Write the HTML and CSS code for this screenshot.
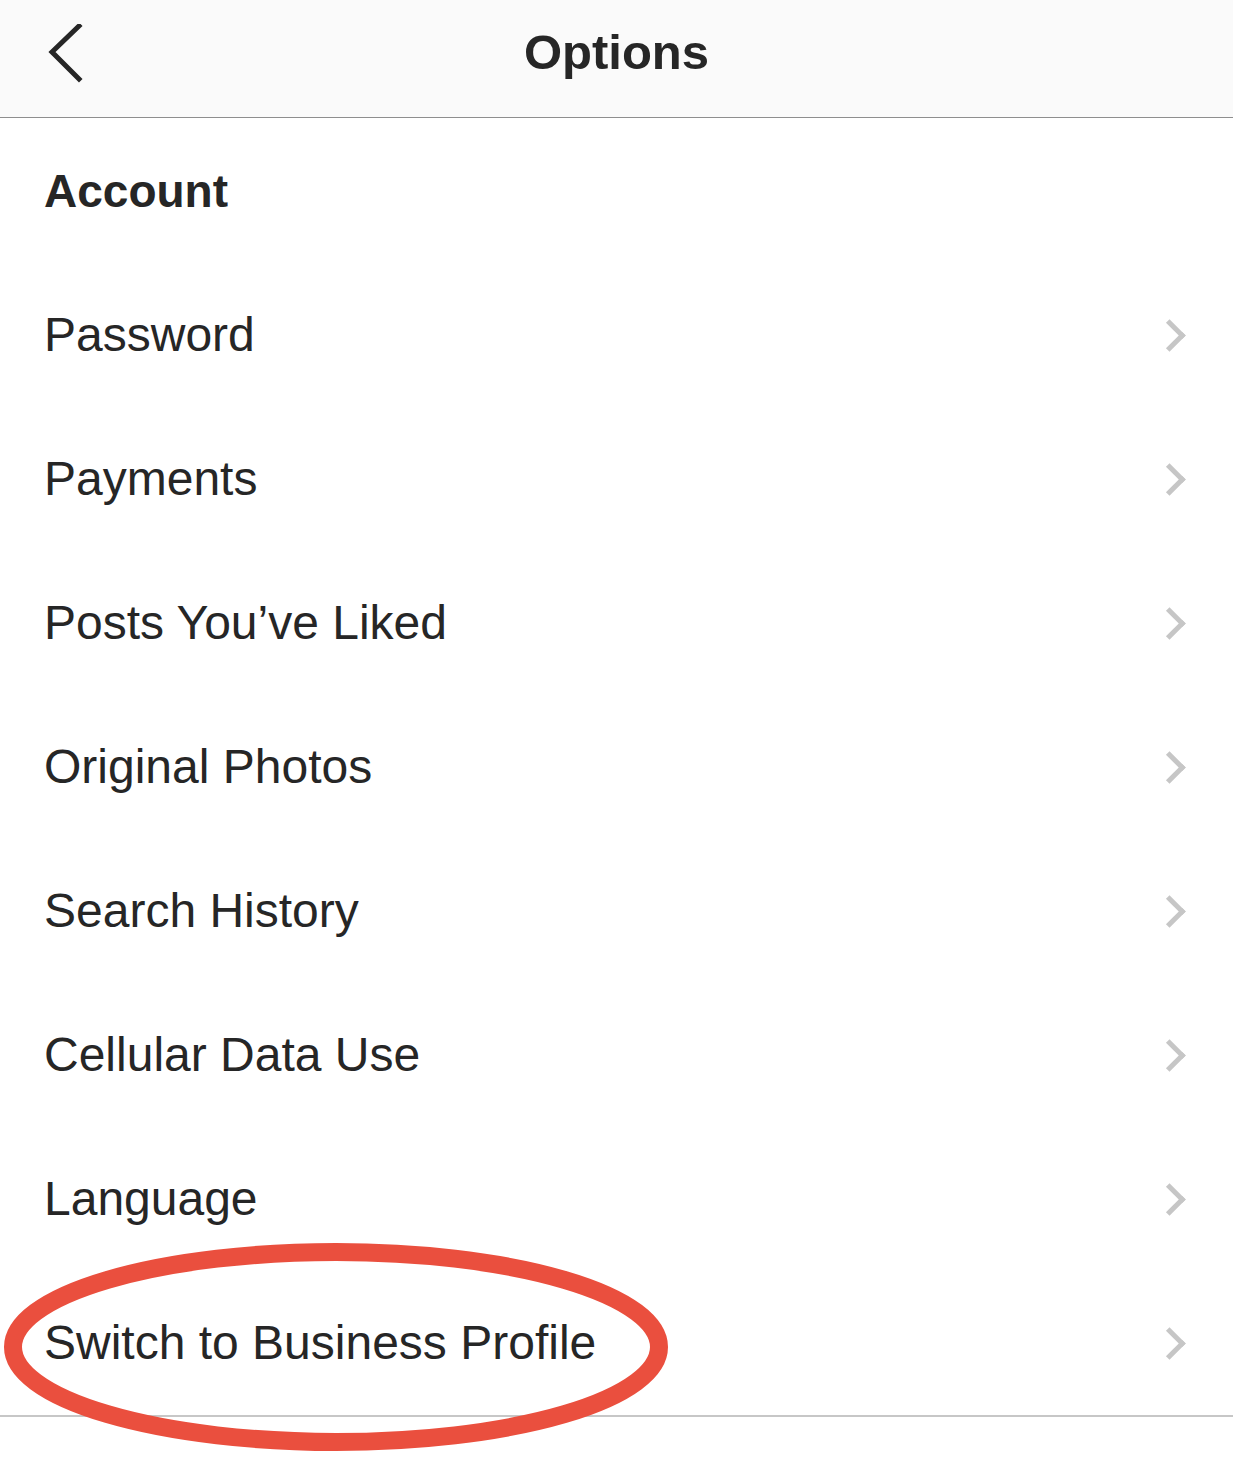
FILE: index.html
```html
<!DOCTYPE html>
<html lang="en">
<head>
<meta charset="utf-8">
<title>Options</title>
<link rel="stylesheet" href="styles.css">
</head>
<body>
<header class="topbar">
  <button class="back" aria-label="Back">
    <svg width="40" height="60" viewBox="0 0 40 60"><polyline points="33,2 6,28 33,55" fill="none" stroke="#262626" stroke-width="5" stroke-linecap="square"/></svg>
  </button>
  <h1 class="title">Options</h1>
</header>
<main class="list">
  <div class="section-head">Account</div>
  <div class="row"><span class="label">Password</span><span class="chev"></span></div>
  <div class="row"><span class="label">Payments</span><span class="chev"></span></div>
  <div class="row"><span class="label">Posts You’ve Liked</span><span class="chev"></span></div>
  <div class="row"><span class="label">Original Photos</span><span class="chev"></span></div>
  <div class="row"><span class="label">Search History</span><span class="chev"></span></div>
  <div class="row"><span class="label">Cellular Data Use</span><span class="chev"></span></div>
  <div class="row"><span class="label">Language</span><span class="chev"></span></div>
  <div class="row row-last">
    <span class="label">Switch to Business Profile</span><span class="chev"></span>
    <svg class="circle" width="690" height="230" viewBox="0 0 690 230"><ellipse cx="336" cy="106" rx="323" ry="95" fill="none" stroke="#ea4f3e" stroke-width="18"/></svg>
  </div>
</main>
</body>
</html>
```

FILE: styles.css
```css
html, body {
  margin: 0;
  padding: 0;
  background: #ffffff;
}
body {
  font-family: "Liberation Sans", Arial, sans-serif;
  color: #262626;
  width: 1233px;
  min-height: 1465px;
  overflow: hidden;
}
.topbar {
  position: relative;
  height: 104px;
  padding-bottom: 13px;
  background: #fafafa;
  border-bottom: 1px solid #8e8e8e;
  display: flex;
  align-items: center;
  justify-content: center;
}
.back {
  position: absolute;
  left: 46px;
  top: 24px;
  padding: 0;
  margin: 0;
  border: 0;
  background: none;
  width: 40px;
  height: 60px;
  display: block;
}
.back svg { display: block; }
.title {
  margin: 0;
  font-size: 49px;
  font-weight: 700;
  line-height: 1;
  color: #262626;
}
.list {
  display: flex;
  flex-direction: column;
}
.section-head {
  height: 145px;
  display: flex;
  align-items: center;
  padding-left: 44px;
  font-size: 46px;
  font-weight: 700;
  line-height: 1;
}
.row {
  position: relative;
  height: 144px;
  display: flex;
  align-items: center;
  justify-content: space-between;
  padding: 0 45px 0 44px;
}
.row-last {
  border-bottom: 2px solid #c7c7c7;
}
.label {
  font-size: 48px;
  line-height: 1;
  color: #262626;
}
.chev {
  width: 18px;
  height: 18px;
  border-top: 5px solid #c6c6c6;
  border-right: 5px solid #c6c6c6;
  transform: rotate(45deg);
  margin-right: 7px;
}
.circle {
  position: absolute;
  left: 0;
  top: -30px;
  pointer-events: none;
}
```
